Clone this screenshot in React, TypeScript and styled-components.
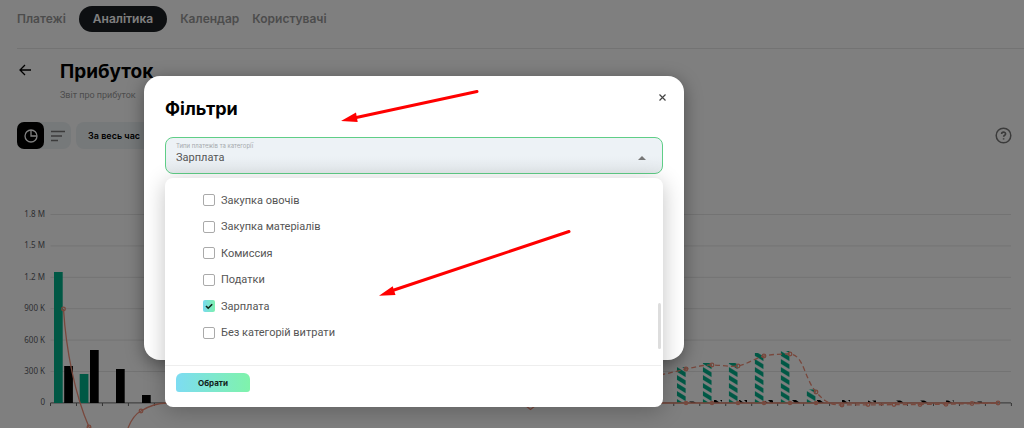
import React, { useState } from 'react';
import styled, { createGlobalStyle } from 'styled-components';

const GlobalStyle = createGlobalStyle`
  *, *::before, *::after { box-sizing: border-box; }
  html, body { margin: 0; height: 100%; overflow: hidden; background: #fff; }
  body, button, select, input { font-family: Inter, "Noto Sans", sans-serif; }
  button { border: 0; padding: 0; cursor: pointer; }
  h1, h2, p { margin: 0; }
`;

const Page = styled.div`
  position: relative;
  height: 100vh;
  overflow: hidden;
  color: #000;
`;

const Nav = styled.nav`
  display: flex;
  align-items: center;
  gap: 13px;
  margin-left: 17px;
  padding: 6px 0 16px;
  border-bottom: 1px solid #e6e6e6;
`;

const NavLink = styled.a<{ $active?: boolean }>`
  padding: ${p => (p.$active ? '0 14px' : '0')};
  border-radius: 14px;
  background: ${p => (p.$active ? '#1a1e22' : 'transparent')};
  color: ${p => (p.$active ? '#fff' : '#999')};
  font-size: 12px;
  font-weight: 600;
  line-height: 26px;
  text-decoration: none;
`;

const Header = styled.header`
  display: flex;
  align-items: flex-start;
  gap: 28px;
  padding: 11px 18px 0;
`;

const BackButton = styled.button`
  display: flex;
  margin-top: 3px;
  background: none;
`;

const PageTitle = styled.h1`
  font-size: 19px;
  font-weight: 700;
  line-height: 24px;
`;

const Subtitle = styled.p`
  margin-top: 5px;
  color: #999;
  font-family: Roboto, sans-serif;
  font-size: 9px;
  line-height: 12px;
`;

const Toolbar = styled.div`
  display: flex;
  align-items: center;
  gap: 5px;
  padding: 21px 12px 0 17px;
`;

const ViewToggle = styled.div`
  display: flex;
  border-radius: 8px;
  background: #edf2f5;
`;

const ViewButton = styled.button<{ $active?: boolean }>`
  display: grid;
  place-items: center;
  width: 27px;
  height: 27px;
  border-radius: 7px;
  background: ${p => (p.$active ? '#000' : 'transparent')};
`;

const PeriodButton = styled.button`
  height: 27px;
  padding: 0 12px;
  border-radius: 8px;
  background: #edf2f5;
  color: #000;
  font-size: 9px;
  font-weight: 600;
`;

const HelpButton = styled.button`
  display: flex;
  margin-left: auto;
  background: none;
`;

const Chart = styled.svg`
  display: block;
  width: 100%;
  margin-top: 51px;
  overflow: visible;
`;

const AxisLabel = styled.text`
  font-family: "Noto Sans", sans-serif;
  font-size: 8px;
  fill: #5c5e66;
  text-anchor: end;
`;

const Overlay = styled.div`
  position: absolute;
  inset: 0;
  padding: 76px 16px 0 144px;
  background: rgba(0, 0, 0, 0.5);
`;

const Dialog = styled.section`
  max-width: 540px;
  padding: 20px 21px 26px;
  border-radius: 16px;
  background: #fff;
  box-shadow: 0 4px 18px rgba(0, 0, 0, 0.4);
`;

const DialogHeader = styled.div`
  display: flex;
  align-items: flex-start;
  justify-content: space-between;
  height: 41px;
`;

const DialogTitle = styled.h2`
  font-size: 18px;
  font-weight: 700;
  line-height: 26px;
`;

const CloseButton = styled.button`
  display: grid;
  place-items: center;
  width: 13px;
  height: 13px;
  margin: -5px -6px 0 0;
  background: none;
`;

const FieldWrap = styled.div`
  position: relative;
`;

const Field = styled.div`
  display: grid;
  grid-template-columns: 1fr 12px;
  grid-template-rows: 8px 16px;
  align-items: center;
  height: 37px;
  padding: 4px 12px 0 10px;
  border: 1px solid #5fce87;
  border-radius: 8px;
  background: linear-gradient(#edf2f6 50%, #e5eaed);
`;

const FieldLabel = styled.label`
  grid-column: 1 / -1;
  color: #a5a9ac;
  font-size: 6px;
  line-height: 8px;
`;

const Select = styled.select`
  width: 100%;
  padding: 0;
  border: 0;
  outline: 0;
  appearance: none;
  background: none;
  color: #555;
  font-family: Roboto, sans-serif;
  font-size: 11px;
  line-height: 16px;
`;

const Dropdown = styled.div`
  position: absolute;
  top: 41px;
  left: 0;
  right: 0;
  border-radius: 8px;
  background: #fff;
  box-shadow: 0 4px 22px rgba(0, 0, 0, 0.24);
`;

const OptionScroll = styled.div`
  display: flex;
  align-items: flex-end;
  justify-content: space-between;
  padding: 9px 2px 16px 38px;
`;

const OptionList = styled.div`
  display: grid;
  grid-auto-rows: 1fr;
  height: 159px;
  margin-bottom: 3px;
`;

const Option = styled.label`
  display: flex;
  align-items: center;
  gap: 6px;
  color: #555;
  font-family: Roboto, sans-serif;
  font-size: 11px;
`;

const Checkbox = styled.input`
  display: grid;
  place-items: center;
  width: 12px;
  height: 12px;
  margin: 0;
  border: 1px solid #aaa;
  border-radius: 2px;
  appearance: none;
  background: #fff;

  &:checked {
    border: 0;
    background: url("data:image/svg+xml,%3Csvg xmlns='http://www.w3.org/2000/svg' viewBox='0 0 12 12'%3E%3Cpath d='M3 6l2.2 2.2L9.2 4.3' fill='none' stroke='%23102018' stroke-width='1.6'/%3E%3C/svg%3E"),
      linear-gradient(90deg, #77d9ef, #7df0ae);
  }
`;

const ScrollThumb = styled.div`
  width: 3px;
  height: 46px;
  border-radius: 2px;
  background: #ddd;
`;

const DropdownFooter = styled.div`
  margin-right: 2px;
  padding: 7px 11px 15px;
  border-top: 1px solid #eee;
`;

const ChooseButton = styled.button`
  display: block;
  width: 74px;
  height: 19px;
  border-radius: 6px 6px 3px 3px;
  background: linear-gradient(90deg, #7ddcf2, #7ff3ab);
  color: #12211a;
  font-size: 8px;
  font-weight: 700;
`;

const ApplyButton = styled.button`
  display: block;
  width: 100px;
  height: 26px;
  margin-top: 134px;
  border-radius: 3px;
  background: linear-gradient(90deg, #8fe0f5, #7ff3ab);
  font-size: 9px;
`;

const Arrows = styled.svg`
  position: absolute;
  top: 0;
  left: 0;
  pointer-events: none;
`;

const links = ['Платежі', 'Аналітика', 'Календар', 'Користувачі'];
const categories = ['Закупка овочів', 'Закупка матеріалів', 'Комиссия', 'Податки', 'Зарплата', 'Без категорій витрати'];
const ticks = ['1.8 M', '1.5 M', '1.2 M', '900 K', '600 K', '300 K', '0'];

const BASE = 203;
const STEP = 25.97;
const income = [[54, 131], [79.7, 29]];
const expense = [[64.2, 37], [90, 53], [116, 34], [142, 8]];
const forecast = [[676.8, 36], [702.7, 40], [728.7, 40], [754.6, 50], [780.6, 52], [806.6, 13.5]];
const forecastExpense = [[688, 1.5], [714, 3], [739, 3], [765, 3], [792, 3], [817, 3], [842, 3], [868, 2.5], [895, 2.5], [920, 2.5], [946, 2.5], [974, 1.5]];
const planned = [[686, 169], [712, 165], [738, 166], [764, 156], [790, 154], [816, 192], [842, 205], [868, 204.6], [894, 204.6], [920, 204.6], [946, 204.3], [972, 203.5]];

function ProfitChart() {
  return (
    <Chart viewBox="0 200 1024 228" role="img" aria-label="Прибуток">
      <defs>
        <pattern id="greenStripe" width={STEP} height="8" patternUnits="userSpaceOnUse" x="676.8" y="367">
          <path d="M0 -8L9 -2.500V2.200L0 -3.300zM0 0L9 5.500V10.200L0 4.700zM0 8L9 13.500V18L0 12.700z" fill="#00b18b" />
        </pattern>
        <pattern id="blackStripe" width="8" height="8" patternUnits="userSpaceOnUse" x="688" y="400">
          <path d="M0 0H4L8 3H3z" fill="#000" />
        </pattern>
      </defs>
      <g transform="translate(0 200)">
        {ticks.map((t, i) => {
          const y = 14.5 + i * 31.4;
          return (
            <g key={t}>
              <path d={`M50.5 ${y}H1011`} stroke={i === 6 ? '#666' : '#e6e6e6'} />
              <AxisLabel x="45" y={y + 2.5}>{t}</AxisLabel>
            </g>
          );
        })}
        {Array.from({ length: 38 }, (_, i) => (
          <path key={i} d={`M${50.5 + i * STEP} ${BASE}v3`} stroke="#666" />
        ))}
        {income.map(([x, h]) => <rect key={x} x={x} y={BASE - h} width="8.7" height={h} fill="#00b18b" />)}
        {expense.map(([x, h]) => <rect key={x} x={x} y={BASE - h} width="8.7" height={h} fill="#000" />)}
      </g>
      {forecast.map(([x, h]) => <rect key={x} x={x} y={403 - h} width="9" height={h} fill="url(#greenStripe)" />)}
      {forecastExpense.map(([x, h]) => <rect key={x} x={x} y={403 - h} width="8" height={h} fill="url(#blackStripe)" />)}
      <g transform="translate(0 200)" fill="none" stroke="#f0907a" strokeWidth="1.3">
        <path d="M63.5 109C66 150 75 195 89 227C99 244 119 245 128 228C132 218 137 213 141 211C149 206 156 203 167 203H998" />
        <path d="M526 206L530.500 209.500L535 206" />
        <path
          strokeDasharray="5 3"
          d="M660 175C670 173 678 171 686 169C695 167 703 165 712 165C721 165 729 167 738 166C748 164 755 158 764 156C773 154 782 154 790 154C804 155 804 178 816 192C825 202 830 205 842 205C880 204.600 930 205 998 203"
        />
        {[[63.5, 109], [89, 227], [141, 211], ...planned, [998, 203]].map(([x, y]) => (
          <circle key={x} cx={x} cy={y} r="1.8" />
        ))}
        {planned.slice(0, 6).map(([x]) => <circle key={x} cx={x} cy={BASE} r="1.6" />)}
      </g>
    </Chart>
  );
}

export default function App() {
  const [checked, setChecked] = useState<string[]>(['Зарплата']);
  const toggle = (name: string) =>
    setChecked(c => (c.includes(name) ? c.filter(n => n !== name) : [...c, name]));

  return (
    <Page>
      <GlobalStyle />
      <Nav>
        {links.map(l => <NavLink key={l} href="#" $active={l === 'Аналітика'}>{l}</NavLink>)}
      </Nav>
      <Header>
        <BackButton aria-label="Назад">
          <svg width="14" height="14" viewBox="0 0 14 14" fill="none" stroke="#000" strokeWidth="1.3">
            <path d="M13 7H2M7 2L2 7l5 5" />
          </svg>
        </BackButton>
        <div>
          <PageTitle>Прибуток</PageTitle>
          <Subtitle>Звіт про прибуток</Subtitle>
        </div>
      </Header>
      <Toolbar>
        <ViewToggle>
          <ViewButton $active aria-label="Діаграма">
            <svg width="14" height="14" viewBox="0 0 14 14" fill="none" stroke="#fff" strokeWidth="1.3">
              <circle cx="7" cy="7" r="6" />
              <path d="M7 1v6h6" />
            </svg>
          </ViewButton>
          <ViewButton aria-label="Список">
            <svg width="14" height="12" viewBox="0 0 14 12" stroke="#777" strokeWidth="1.5">
              <path d="M0 1.500h14M0 6h11M0 10.500h7" />
            </svg>
          </ViewButton>
        </ViewToggle>
        <PeriodButton>За весь час</PeriodButton>
        <HelpButton aria-label="Довідка">
          <svg width="17" height="17" viewBox="0 0 17 17" fill="none" stroke="#777" strokeWidth="1.5">
            <circle cx="8.5" cy="8.5" r="7.3" />
            <path d="M6.600 7.100c0-2.600 4-2.500 4-.200 0 1.400-2 1.300-2 2.900M8.600 11.200v1.400" strokeWidth="1.6" />
          </svg>
        </HelpButton>
      </Toolbar>
      <ProfitChart />

      <Overlay>
        <Dialog role="dialog" aria-labelledby="filters-title">
          <DialogHeader>
            <DialogTitle id="filters-title">Фільтри</DialogTitle>
            <CloseButton aria-label="Закрити">
              <svg width="7" height="7" viewBox="0 0 7 7" stroke="#444" strokeWidth="1.2">
                <path d="M.5 .5l6 6M6.500 .5l-6 6" />
              </svg>
            </CloseButton>
          </DialogHeader>
          <FieldWrap>
            <Field>
              <FieldLabel htmlFor="category">Типи платежів та категорії</FieldLabel>
              <Select id="category" defaultValue="Зарплата">
                {categories.map(c => <option key={c}>{c}</option>)}
              </Select>
              <svg width="8" height="4" viewBox="0 0 8 4" fill="#777"><path d="M0 4L4 0l4 4z" /></svg>
            </Field>
            <Dropdown>
              <OptionScroll>
                <OptionList>
                  {categories.map(c => (
                    <Option key={c}>
                      <Checkbox type="checkbox" checked={checked.includes(c)} onChange={() => toggle(c)} />
                      {c}
                    </Option>
                  ))}
                </OptionList>
                <ScrollThumb />
              </OptionScroll>
              <DropdownFooter>
                <ChooseButton>Обрати</ChooseButton>
              </DropdownFooter>
            </Dropdown>
          </FieldWrap>
          <ApplyButton aria-label="Застосувати" />
        </Dialog>
      </Overlay>

      <Arrows width="1024" height="428" viewBox="0 0 1024 428" fill="#f00" stroke="#f00" aria-hidden="true">
        <path d="M477 91.500L354 118M569 231.500L391 291" strokeWidth="3" strokeLinecap="round" />
        <path d="M341 121L356 112.500L357.700 122zM379 295.700L392.700 286.300L395.500 295z" stroke="none" />
      </Arrows>
    </Page>
  );
}
